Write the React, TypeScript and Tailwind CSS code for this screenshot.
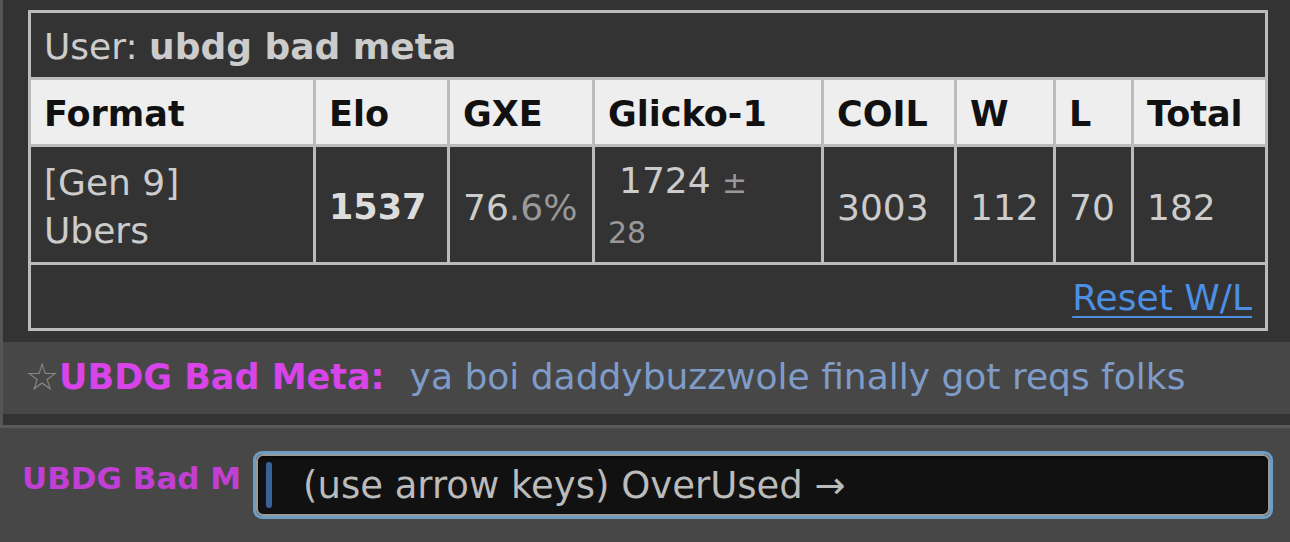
import React from 'react';

interface Rating {
  format: [string, string];
  elo: number;
  gxe: [string, string];
  glicko: [string, string];
  coil: number;
  w: number;
  l: number;
  total: number;
}

const row: Rating = {
  format: ['[Gen 9]', 'Ubers'],
  elo: 1537,
  gxe: ['76', '.6%'],
  glicko: ['1724', '28'],
  coil: 3003,
  w: 112,
  l: 70,
  total: 182,
};

const headers = ['Format', 'Elo', 'GXE', 'Glicko-1', 'COIL', 'W', 'L', 'Total'];
const widths = ['w-[285px]', 'w-[134px]', 'w-[145px]', 'w-[229px]', 'w-[133px]', 'w-[99px]', 'w-[78px]', 'w-[134px]'];

const cell = 'border-[3px] border-[#bbb] px-[13px] align-middle';

const App: React.FC = () => {
  return (
    <div className="w-[1290px] h-[542px] overflow-hidden bg-[#474747] font-['DejaVu_Sans',Verdana,sans-serif] text-[36px]">
      {/* ladder popup */}
      <div className="bg-[#333] border-l-[3px] border-[#555] pt-[10px] pb-[11px] pl-[25px]">
        <table className="w-[1237px] table-fixed border-collapse border-[3px] border-[#bbb]">
          <colgroup>
            {widths.map((w, i) => (
              <col key={i} className={w} />
            ))}
          </colgroup>
          <tbody>
            <tr>
              <td colSpan={8} className={`${cell} leading-[52px] pt-[8px] pb-[4px] text-[#ccc]`}>
                User: <strong className="font-bold">ubdg bad meta</strong>
              </td>
            </tr>
            <tr className="bg-[#eee]">
              {headers.map(h => (
                <th key={h} className={`${cell} text-left font-bold text-[35px] text-[#111] leading-[52px] pt-[8px] pb-[4px]`}>
                  {h}
                </th>
              ))}
            </tr>
            <tr className="text-[#ddd]">
              <td className={`${cell} leading-[48px] pt-[10px] pb-[5px] text-[#ccc]`}>
                {row.format[0]}
                <br />
                {row.format[1]}
              </td>
              <td className={`${cell} pt-[6px] font-bold text-[35px]`}>{row.elo}</td>
              <td className={`${cell} pt-[6px] text-[#ccc]`}>
                {row.gxe[0]}
                <span className="text-[#999]">{row.gxe[1]}</span>
              </td>
              <td className={`${cell} leading-[48px] pt-[10px] pb-[5px] text-[#ccc]`}>
                <span className="pl-[11px]">{row.glicko[0]}</span>{' '}
                <span className="text-[#999] text-[30px]">
                  ±
                  <br />
                  {row.glicko[1]}
                </span>
              </td>
              <td className={`${cell} pt-[6px] text-[#ccc]`}>{row.coil}</td>
              <td className={`${cell} pt-[6px] text-[#ccc]`}>{row.w}</td>
              <td className={`${cell} pt-[6px] text-[#ccc]`}>{row.l}</td>
              <td className={`${cell} pt-[6px] text-[#ccc]`}>{row.total}</td>
            </tr>
            <tr>
              <td colSpan={8} className={`${cell} text-right leading-[52px] pt-[7px] pb-[4px]`}>
                <a className="text-[#4d8fe4] underline decoration-[2px] underline-offset-[6px] cursor-pointer">Reset W/L</a>
              </td>
            </tr>
          </tbody>
        </table>
      </div>

      {/* chat message */}
      <div className="h-[72px] bg-[#474747] border-l-[3px] border-[#555] flex items-center pl-[22px] pb-[2px] whitespace-nowrap">
        <span className="text-[#888] text-[38px]">☆</span>
        <strong className="font-bold text-[35px] text-[#d744e8]">UBDG Bad Meta:</strong>
        <span className="ml-[25px] text-[#7f9cc8]">ya boi daddybuzzwole finally got reqs folks</span>
      </div>
      <div className="h-[11px] bg-[#333] border-l-[3px] border-[#555]" />

      {/* chat input */}
      <div className="border-t-[3px] border-[#5a5a5a] bg-[#474747] flex items-start pt-[23px] pl-[22px] pr-[17px]">
        <div className="w-[220px] mt-[1px] whitespace-nowrap font-bold text-[31px] text-[#c23fd4] leading-[52px]">
          UBDG Bad M
        </div>
        <div className="ml-[11px] flex-1 h-[68px] rounded-[9px] border-[3px] border-[#6d9cc4]">
          <div className="h-full rounded-[7px] border-[2px] border-[#999] bg-[#111] shadow-[inset_0_2px_3px_rgba(0,0,0,0.6)] flex items-center pl-[8px]">
            <div className="w-[6px] h-[46px] rounded-[3px] bg-[#3a619a]" />
            <span className="ml-[31px] text-[#bbb] text-[37px] pt-[2px]">(use arrow keys) OverUsed →</span>
          </div>
        </div>
      </div>
    </div>
  );
};

export default App;
